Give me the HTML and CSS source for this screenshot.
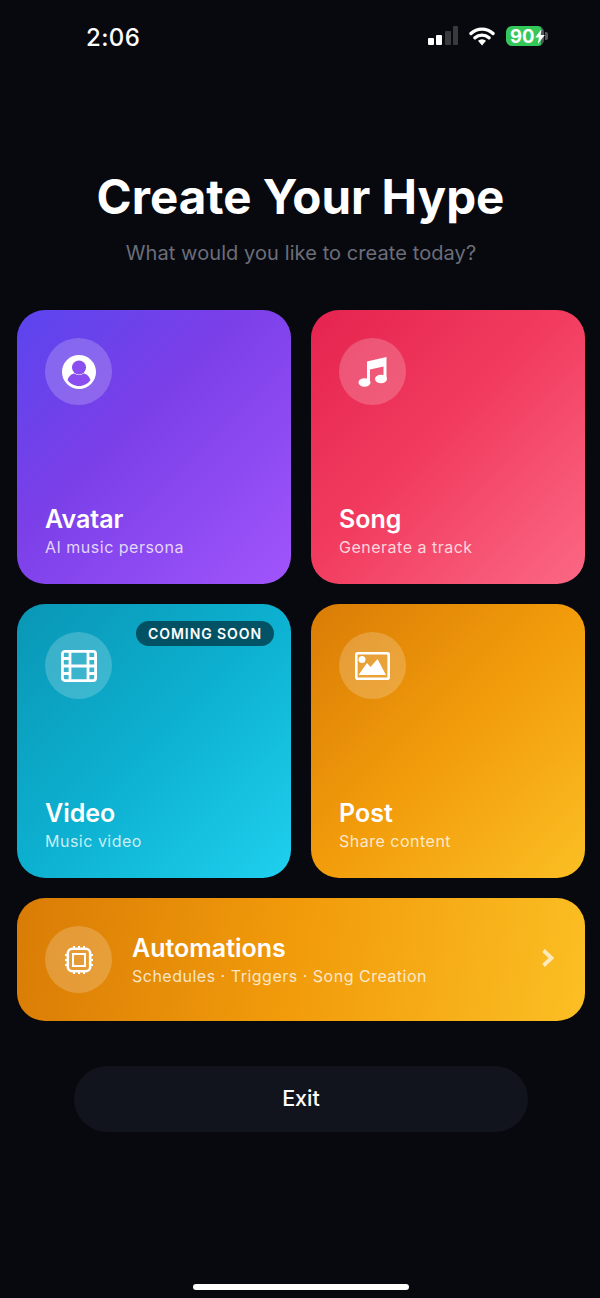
FILE: index.html
```html
<!DOCTYPE html>
<html lang="en">
<head>
<meta charset="utf-8">
<title>Create Your Hype</title>
<link rel="stylesheet" href="styles.css">
</head>
<body>
<div class="screen">
  <header class="status">
    <span class="time">2:06</span>
    <div class="status-icons">
      <svg class="signal" width="30" height="20" viewBox="0 0 30 20"><rect x="0" y="12" width="6" height="7" rx="1" fill="#fff"/><rect x="8" y="9" width="6" height="10" rx="1" fill="#fff"/><rect x="17" y="5" width="6" height="14" rx="1" fill="#3a3a3e"/><rect x="25" y="0" width="5" height="19" rx="1" fill="#3a3a3e"/></svg>
      <svg class="wifi" width="26" height="20" viewBox="0 0 26 20"><path d="M2 7.500a16 16 0 0 1 22 0M6 11.800a10.500 10.500 0 0 1 14 0" fill="none" stroke="#fff" stroke-width="3.400" stroke-linecap="round"/><path d="M9 14.800a6 6 0 0 1 8 0L13 19.500z" fill="#fff"/></svg>
      <div class="battery"><div class="battery-body"><span class="battery-text">90</span><svg class="bolt" width="10" height="15" viewBox="0 0 9 14"><path d="M6 0 0 8h3.500L2.500 14 9 5.500H5z" fill="#fff"/></svg></div><span class="battery-cap"></span></div>
    </div>
  </header>

  <h1 class="title">Create Your Hype</h1>
  <p class="subtitle">What would you like to create today?</p>

  <main class="grid">
    <section class="card card-avatar">
      <div class="icon-wrap"><svg width="34" height="34" viewBox="0 0 34 34"><circle cx="17" cy="17" r="17" fill="#fff"/><circle cx="17" cy="12.500" r="7" fill="#8a4df0"/><path d="M5.500 25c1.500-4.500 5-6.500 7-6.500 1.500 1 3 1.500 4.500 1.500s3-.5 4.500-1.500c2 0 5.500 2 7 6.500-2.500 3.500-6.500 6-11.500 6s-9-2.500-11.500-6z" fill="#8a4df0"/></svg></div>
      <div class="card-text"><h2 class="card-title">Avatar</h2><p class="card-sub">AI music persona</p></div>
    </section>
    <section class="card card-song">
      <div class="icon-wrap"><svg width="30" height="32" viewBox="0 0 30 32"><path d="M9 5.500 28.500 1v21h-3V10.500L12 13.500V26H9z" fill="#fff"/><ellipse cx="6.500" cy="26.500" rx="6" ry="4.200" fill="#fff"/><ellipse cx="23" cy="23" rx="6" ry="4.200" fill="#fff"/></svg></div>
      <div class="card-text"><h2 class="card-title">Song</h2><p class="card-sub">Generate a track</p></div>
    </section>
    <section class="card card-video">
      <span class="badge">COMING SOON</span>
      <div class="icon-wrap"><svg width="36" height="32" viewBox="0 0 36 32"><rect x="1.400" y="1.400" width="33.200" height="29.200" rx="2.500" fill="none" stroke="#fff" stroke-width="2.800"/><path d="M9 1v30M27 1v30M9 16h18" stroke="#fff" stroke-width="2.800"/><path d="M2 8.500h7M2 16h7M2 23.500h7M27 8.500h7M27 16h7M27 23.500h7" stroke="#fff" stroke-width="2.800"/></svg></div>
      <div class="card-text"><h2 class="card-title">Video</h2><p class="card-sub">Music video</p></div>
    </section>
    <section class="card card-post">
      <div class="icon-wrap"><svg width="35" height="28" viewBox="0 0 35 28"><rect x="1.300" y="1.300" width="32.400" height="25.400" rx="1.500" fill="none" stroke="#fff" stroke-width="2.600"/><circle cx="7" cy="7.500" r="3.500" fill="#fff"/><path d="M3.500 23 12 11l3.500 4L22.500 7 31 23z" fill="#fff"/></svg></div>
      <div class="card-text"><h2 class="card-title">Post</h2><p class="card-sub">Share content</p></div>
    </section>
    <section class="card wide">
      <div class="icon-wrap"><svg width="30" height="30" viewBox="0 0 30 30"><rect x="3.800" y="3.800" width="22.400" height="22.400" rx="4.500" fill="none" stroke="#fff" stroke-width="2.600"/><rect x="9" y="9" width="12" height="12" fill="none" stroke="#fff" stroke-width="2"/><path d="M10 1v3M15 1v3M20 1v3M10 26v3M15 26v3M20 26v3M1 10h3M1 15h3M1 20h3M26 10h3M26 15h3M26 20h3" stroke="#fff" stroke-width="2"/></svg></div>
      <div class="wide-text"><h2 class="card-title">Automations</h2><p class="card-sub">Schedules · Triggers · Song Creation</p></div>
      <svg class="chevron" width="14" height="20" viewBox="0 0 14 20"><path d="M2.500 2.500 10.500 10l-8 7.500" fill="none" stroke="#fff" stroke-opacity=".7" stroke-width="3.800"/></svg>
    </section>
  </main>

  <button class="exit" type="button">Exit</button>
  <div class="home-bar"></div>
</div>
</body>
</html>
```
FILE: styles.css
```css
* { box-sizing: border-box; }
html, body { margin: 0; padding: 0; }
body {
  background: #08090e;
  font-family: Inter, "Liberation Sans", sans-serif;
  color: #fff;
}
.screen {
  width: 600px;
  height: 1298px;
  position: relative;
  overflow: hidden;
  display: flex;
  flex-direction: column;
  align-items: center;
}
.status {
  width: 100%;
  height: 76px;
  padding: 22px 52px 0 86px;
  display: flex;
  justify-content: space-between;
  align-items: flex-start;
}
.time { font-size: 24px; font-weight: 500; line-height: 32px; letter-spacing: .4px; }
.status-icons { display: flex; align-items: center; gap: 11px; height: 32px; margin-top: -2px; }
.battery { display: flex; align-items: center; gap: 1px; }
.battery-body {
  width: 38px; height: 20px; border-radius: 6px;
  display: flex; align-items: center; padding-left: 4px;
  background: linear-gradient(90deg, #34c759 92%, #55585a 92%);
}
.battery-text { font-size: 18.500px; font-weight: 700; line-height: 20px; letter-spacing: .1px; }
.bolt { flex: none; }
.battery-cap { width: 3px; height: 8px; background: #55585a; border-radius: 0 2px 2px 0; }
.title {
  margin: 93px 0 0 1px;
  font-size: 47.500px;
  line-height: 56px;
  font-weight: 700;
  height: 56px;
}
.subtitle {
  margin: 14px 0 0 2px;
  font-size: 20px;
  line-height: 28px;
  color: #6b6e7a;
  letter-spacing: .08px;
}
.grid {
  margin-top: 43px;
  width: 100%;
  padding: 0 15px 0 17px;
  display: grid;
  grid-template-columns: 274px 274px;
  grid-template-rows: 274px 274px 123px;
  gap: 20px;
}
.card {
  border-radius: 28px;
  padding: 28px;
  display: flex;
  flex-direction: column;
  justify-content: space-between;
  position: relative;
  overflow: hidden;
}
.card-avatar { background: linear-gradient(135deg, #5b45ee, #7a3fe8 40%, #a155fb); }
.card-song { background: linear-gradient(135deg, #e5244f, #f13a5e 45%, #fb6884); }
.card-video { background: linear-gradient(135deg, #0a96b5, #0db0d0 50%, #1fd0ee); }
.card-post { background: linear-gradient(135deg, #d97c06, #f29c0b 50%, #fbbf24); }
.icon-wrap {
  width: 67px; height: 67px; border-radius: 50%;
  background: rgba(255,255,255,.2);
  display: flex; align-items: center; justify-content: center;
  flex: none;
}
.card-text { margin-bottom: -2px; }
.card-title { margin: -1px 0 0; font-size: 25px; line-height: 30px; font-weight: 600; }
.card-sub { margin: 3px 0 0; font-size: 16px; line-height: 21px; color: rgba(255,255,255,.78); letter-spacing: .5px; }
.badge {
  position: absolute; top: 17px; right: 17px;
  height: 25px; padding: 0 12px;
  border-radius: 13px;
  background: rgba(0,60,75,.8);
  font-size: 14px; font-weight: 600; line-height: 25px; letter-spacing: .92px;
}
.wide {
  grid-column: 1 / -1;
  flex-direction: row;
  justify-content: flex-start;
  align-items: center;
  padding: 0 28px;
  background: linear-gradient(100deg, #d97c06, #f29c0b 50%, #fbbf24);
}
.wide-text { margin-left: 20px; padding-top: 2px; flex: 1; }
.chevron { margin: 0 2px 3px 0; }
.exit {
  margin: 45px 0 0 2px;
  width: 454px; height: 66px;
  padding: 0 0 2px;
  border: 0; border-radius: 33px;
  background: #12141d;
  color: #fff;
  font: 500 21.500px Inter, "Liberation Sans", sans-serif;
}
.home-bar {
  position: absolute; left: 193px; bottom: 8px;
  width: 216px; height: 6px; border-radius: 3px; background: #fff;
}
```
